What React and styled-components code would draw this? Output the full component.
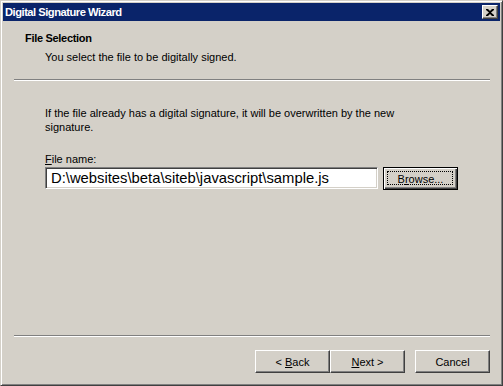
import React from 'react';
import styled, { createGlobalStyle } from 'styled-components';

const GlobalStyle = createGlobalStyle`
  html, body {
    margin: 0;
    padding: 0;
    background: #d4d0c8;
  }
  body {
    font-family: 'Liberation Sans', Arial, sans-serif;
    font-size: 11px;
    color: #000;
  }
`;

const Window = styled.div`
  box-sizing: border-box;
  width: 503px;
  height: 386px;
  display: flex;
  flex-direction: column;
  background: #d4d0c8;
  border: 1px solid;
  border-color: #d4d0c8 #404040 #404040 #d4d0c8;
  box-shadow: inset 1px 1px #ffffff, inset -1px -1px #808080;
  padding: 2px;
`;

const TitleBar = styled.div`
  height: 18px;
  display: flex;
  align-items: center;
  justify-content: space-between;
  background: #0a246a;
  padding: 0 2px 0 2px;
`;

const TitleText = styled.span`
  color: #fff;
  font-weight: bold;
  font-size: 11.2px;
  letter-spacing: -0.5px;
`;

const CloseButton = styled.button`
  box-sizing: border-box;
  width: 16px;
  height: 14px;
  padding: 0;
  display: flex;
  align-items: center;
  justify-content: center;
  background: #d4d0c8;
  border: 1px solid;
  border-color: #ffffff #404040 #404040 #ffffff;
  box-shadow: inset -1px -1px #808080;
`;

const Header = styled.div`
  padding: 11px 0 15px 22px;
`;

const HeaderTitle = styled.div`
  font-weight: bold;
  line-height: 13px;
  letter-spacing: -0.3px;
`;

const HeaderSub = styled.div`
  line-height: 13px;
  margin: 6px 0 0 20px;
`;

const Separator = styled.div`
  margin: 0 10px 0 11px;
  height: 0;
  border-top: 1px solid #808080;
  border-bottom: 1px solid #ffffff;
`;

const Body = styled.div`
  flex: 1;
  padding: 25px 0 0 42px;
`;

const Paragraph = styled.p`
  margin: 0;
  width: 360px;
  line-height: 14px;
`;

const Label = styled.div`
  margin-top: 19px;
  line-height: 13px;
`;

const Accel = styled.span`
  text-decoration: underline;
`;

const FieldRow = styled.div`
  display: flex;
  align-items: flex-start;
  gap: 5px;
  margin-top: 1px;
`;

const TextInput = styled.div`
  box-sizing: border-box;
  width: 333px;
  height: 22px;
  background: #fff;
  border: 1px solid;
  border-color: #808080 #ffffff #ffffff #808080;
  box-shadow: inset 1px 1px #404040, inset -1px -1px #d4d0c8;
  padding: 0 0 0 5px;
  display: flex;
  align-items: center;
  white-space: nowrap;
  overflow: hidden;
  font-size: 14.8px;
`;

const Button = styled.button`
  box-sizing: border-box;
  width: 75px;
  height: 23px;
  padding: 0;
  font-family: 'Liberation Sans', Arial, sans-serif;
  font-size: 11px;
  color: #000;
  background: #d4d0c8;
  border: 1px solid;
  border-color: ${p => p.$default ? '#000' : '#ffffff #404040 #404040 #ffffff'};
  box-shadow: ${p => p.$default
    ? 'inset 1px 1px #ffffff, inset -1px -1px #404040, inset -2px -2px #808080'
    : 'inset -1px -1px #808080'};
  position: relative;
  white-space: pre;
`;

const FocusRing = styled.span`
  position: absolute;
  inset: 3px 4px 4px 3px;
  border: 1px dotted #000;
  pointer-events: none;
`;

const Footer = styled.div`
  display: flex;
  justify-content: flex-end;
  padding: 13px 10px 10px 0;
`;

const ButtonGroup = styled.div`
  display: flex;
  margin-right: 10px;
`;

export default function App() {
  return (
    <>
      <GlobalStyle />
      <Window>
        <TitleBar>
          <TitleText>Digital Signature Wizard</TitleText>
          <CloseButton aria-label="Close">
            <svg width="8" height="7" viewBox="0 0 8 7">
              <path d="M0 0h2l2 2 2-2h2v1L5 3.5 8 6v1H6L4 5 2 7H0V6l3-2.5L0 1z" fill="#000" />
            </svg>
          </CloseButton>
        </TitleBar>
        <Header>
          <HeaderTitle>File Selection</HeaderTitle>
          <HeaderSub>You select the file to be digitally signed.</HeaderSub>
        </Header>
        <Separator />
        <Body>
          <Paragraph>
            If the file already has a digital signature, it will be overwritten by the new signature.
          </Paragraph>
          <Label><Accel>F</Accel>ile name:</Label>
          <FieldRow>
            <TextInput>D:\websites\beta\siteb\javascript\sample.js</TextInput>
            <Button $default>
              <FocusRing />
              B<Accel>r</Accel>owse...
            </Button>
          </FieldRow>
        </Body>
        <Separator />
        <Footer>
          <ButtonGroup>
            <Button>{'< '}<Accel>B</Accel>ack</Button>
            <Button><Accel>N</Accel>{'ext >'}</Button>
          </ButtonGroup>
          <Button>Cancel</Button>
        </Footer>
      </Window>
    </>
  );
}
